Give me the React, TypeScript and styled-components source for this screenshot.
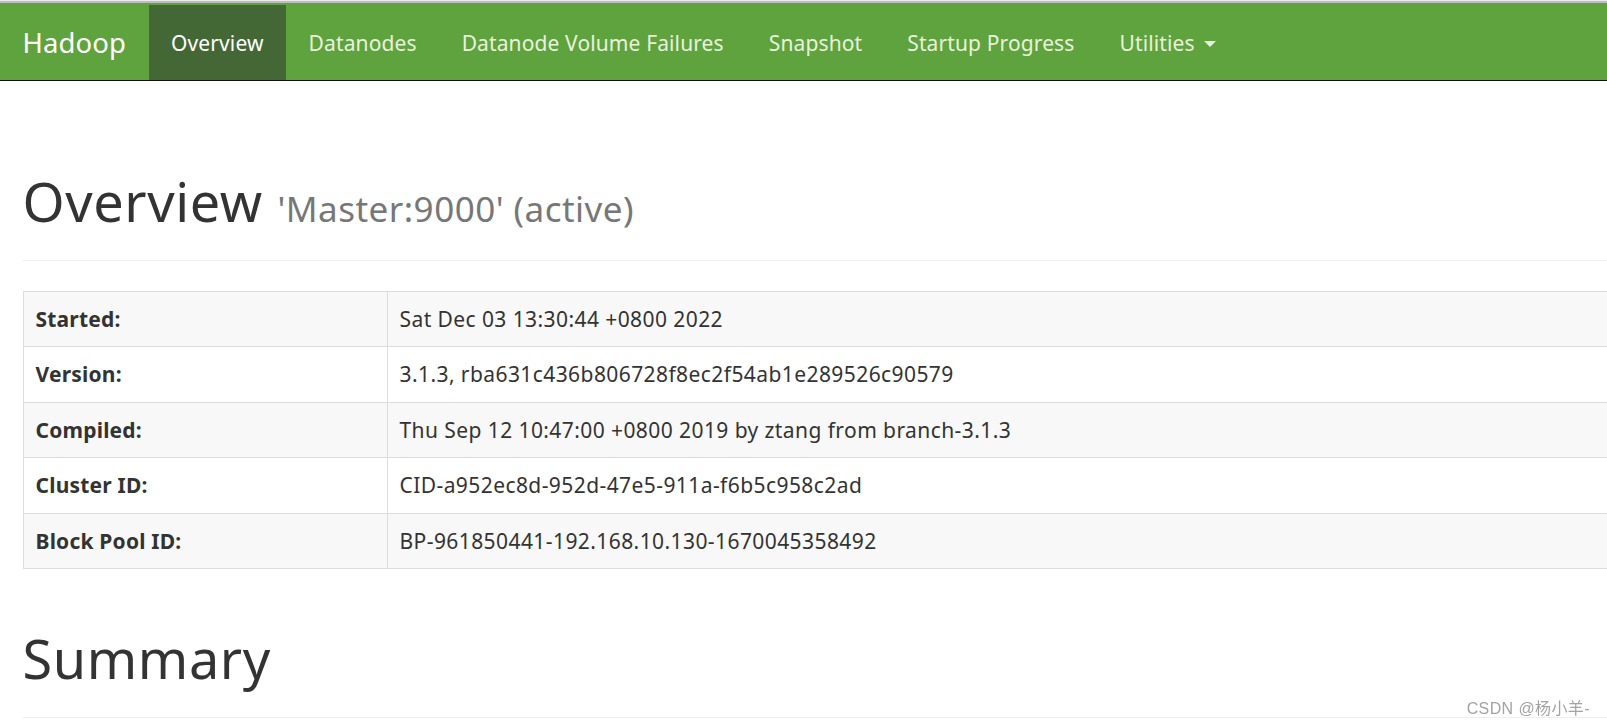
import React from "react";
import styled, { createGlobalStyle } from "styled-components";

const GlobalStyle = createGlobalStyle`
  html, body {
    margin: 0;
    padding: 0;
    overflow: hidden;
    background: #ffffff;
  }
  body {
    font-family: "Noto Sans", "Open Sans", sans-serif;
    font-size: 21px;
    color: #333333;
    line-height: 1.42857;
  }
  * { box-sizing: border-box; }
`;

const Header = styled.header`
  border-top: 1px solid #ececec;
`;

const NavBar = styled.nav`
  display: flex;
  align-items: stretch;
  height: 80px;
  background: #5fa33e;
  border-top: 2px solid #bdbdbd;
  padding-top: 2px;
  border-bottom: 1px solid #111111;
`;

const Brand = styled.a`
  display: block;
  padding: 22.5px;
  font-size: 27.5px;
  letter-spacing: 0.1px;
  line-height: 30px;
  height: 75px;
  color: #ffffff;
  text-decoration: none;
`;

const NavList = styled.ul`
  display: flex;
  list-style: none;
  margin: 0;
  padding: 0;
`;

const NavLink = styled.a<{ $active?: boolean }>`
  display: flex;
  align-items: center;
  height: 75px;
  padding: 22.5px;
  line-height: 30px;
  font-size: 21px;
  letter-spacing: 0.12px;
  text-decoration: none;
  white-space: nowrap;
  color: ${(p) => (p.$active ? "#ffffff" : "#e9f2dc")};
  background: ${(p) => (p.$active ? "#446835" : "transparent")};
`;

const Caret = styled.span`
  display: inline-block;
  width: 0;
  height: 0;
  margin-left: 9px;
  margin-top: 2px;
  border-top: 6px solid #e9f2dc;
  border-left: 6px solid transparent;
  border-right: 6px solid transparent;
`;

const Container = styled.main`
  width: 1755px;
  padding: 0 22.5px;
`;

const PageHeader = styled.div<{ $top: number }>`
  margin-top: ${(p) => p.$top}px;
  margin-bottom: 30px;
  padding-bottom: 13.5px;
  border-bottom: 1px solid #eeeeee;
`;

const Title = styled.h1`
  margin: 0 0 15px;
  font-size: 54px;
  font-weight: 400;
  letter-spacing: 0.6px;
  line-height: 1.1;
  color: #333333;
`;

const Small = styled.small`
  font-size: 65%;
  font-weight: 400;
  letter-spacing: 0.45px;
  line-height: 1;
  color: #777777;
`;

const InfoTable = styled.table`
  width: 100%;
  border-collapse: collapse;
  border: 1px solid #dddddd;
`;

const Row = styled.tr<{ $striped: boolean }>`
  background: ${(p) => (p.$striped ? "#f8f8f8" : "#ffffff")};
`;

const Label = styled.th`
  width: 364px;
  text-align: left;
  font-weight: 700;
  letter-spacing: 0.2px;
  padding: 12px;
  line-height: 30.5px;
  border: 1px solid #dddddd;
  vertical-align: top;
`;

const Value = styled.td`
  padding: 12px;
  line-height: 30.5px;
  letter-spacing: 0.42px;
  border: 1px solid #dddddd;
  vertical-align: top;
`;

const Watermark = styled.div`
  position: fixed;
  right: 17px;
  bottom: 8px;
  font-family: "Liberation Sans", "Noto Sans CJK SC", sans-serif;
  font-size: 16px;
  letter-spacing: 0.4px;
  line-height: 19px;
  color: #a3a3a3;
`;

const navItems = [
  { label: "Overview", active: true },
  { label: "Datanodes" },
  { label: "Datanode Volume Failures" },
  { label: "Snapshot" },
  { label: "Startup Progress" },
];

const rows: [string, string][] = [
  ["Started:", "Sat Dec 03 13:30:44 +0800 2022"],
  ["Version:", "3.1.3, rba631c436b806728f8ec2f54ab1e289526c90579"],
  ["Compiled:", "Thu Sep 12 10:47:00 +0800 2019 by ztang from branch-3.1.3"],
  ["Cluster ID:", "CID-a952ec8d-952d-47e5-911a-f6b5c958c2ad"],
  ["Block Pool ID:", "BP-961850441-192.168.10.130-1670045358492"],
];

export default function App() {
  return (
    <>
      <GlobalStyle />
      <Header>
        <NavBar>
          <Brand href="#">Hadoop</Brand>
          <NavList>
            {navItems.map((item) => (
              <li key={item.label}>
                <NavLink href="#" $active={item.active}>
                  {item.label}
                </NavLink>
              </li>
            ))}
            <li>
              <NavLink href="#">
                Utilities
                <Caret />
              </NavLink>
            </li>
          </NavList>
        </NavBar>
      </Header>
      <Container>
        <PageHeader $top={91}>
          <Title>
            Overview <Small>'Master:9000' (active)</Small>
          </Title>
        </PageHeader>
        <InfoTable>
          <tbody>
            {rows.map(([k, v], i) => (
              <Row key={k} $striped={i % 2 === 0}>
                <Label>{k}</Label>
                <Value>{v}</Value>
              </Row>
            ))}
          </tbody>
        </InfoTable>
        <PageHeader $top={60}>
          <Title>Summary</Title>
        </PageHeader>
      </Container>
      <Watermark>CSDN @杨小羊-</Watermark>
    </>
  );
}
